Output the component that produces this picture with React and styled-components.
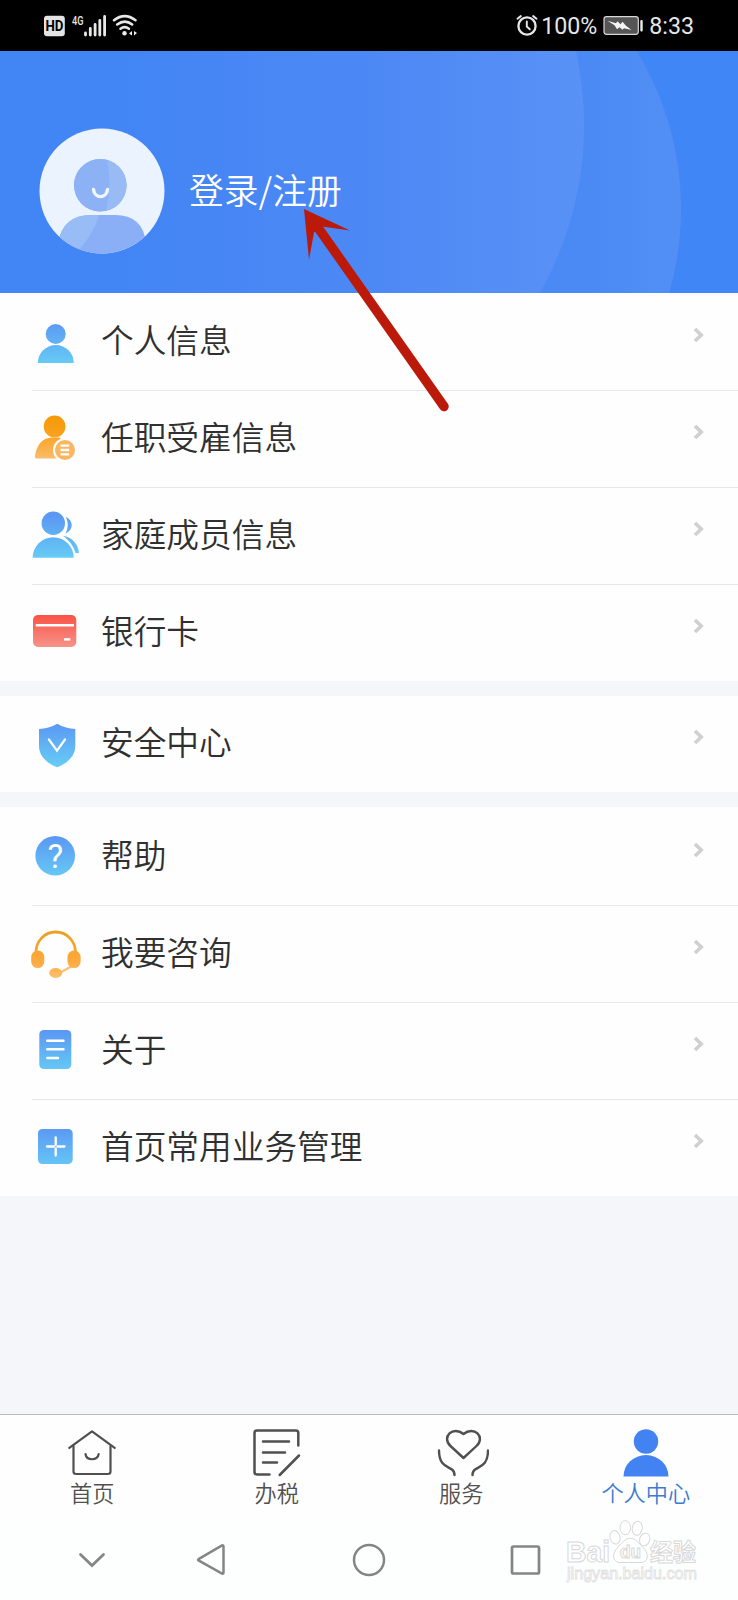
import React from 'react';
import styled, { createGlobalStyle } from 'styled-components';

const GlobalStyle = createGlobalStyle`
    * {
        box-sizing: border-box;
    }

    body {
        margin: 0;
        background: #f5f6fa;
        font-family: Roboto, "Noto Sans CJK SC", sans-serif;
    }
`

const Page = styled.div`
    position: relative;
    display: flex;
    flex-direction: column;
    width: 738px;
    height: 1600px;
    overflow: hidden;
    background: #f5f6fa;
`

const StatusBar = styled.div`
    display: flex;
    flex: 0 0 51px;
    align-items: center;
    justify-content: space-between;
    padding: 0 44px 0 44px;
    background: #000;
    color: #e6e6e6;
`

const StatusGroup = styled.div`
    display: flex;
    align-items: center;
    height: 51px;
`

const StatusText = styled.span`
    font-size: 23.2px;
    line-height: 51px;
    padding-top: 1px;
    margin-left: ${props => props.$gap || 0}px;
`

const BatteryIcon = styled.svg`
    margin-left: 6px;
`

const Header = styled.header`
    position: relative;
    display: flex;
    flex: 0 0 242px;
    align-items: center;
    padding: 38px 0 0 39px;
    background: #4285f4;
`

const HeaderBackdrop = styled.svg`
    position: absolute;
    left: 0;
    top: 0;
`

const Avatar = styled.svg`
    position: relative;
`

const LoginText = styled.div`
    position: relative;
    margin: -5px 0 0 23px;
    color: #fff;
    font-family: "Noto Sans CJK SC", sans-serif;
    font-size: 34.8px;
    font-weight: 350;
    line-height: 50px;
`

const MenuGroup = styled.section`
    flex: 0 0 auto;
    padding-top: ${props => props.$top || 0}px;
    margin-bottom: 15px;
    background: #fefefe;
`

const MenuRow = styled.div`
    display: flex;
    align-items: center;
    height: 97px;
    margin-left: 32px;
    padding-right: 33px;
    border-bottom: 1px solid #e6e8e9;

    &:last-child {
        height: 96px;
        border-bottom: none;
    }
`

const MenuIcon = styled.svg`
    flex: 0 0 56px;
    margin-left: -4px;
`

const MenuLabel = styled.div`
    flex: 1;
    margin: -6px 0 0 17px;
    color: #303030;
    font-family: "Noto Sans CJK SC", sans-serif;
    font-size: 32.7px;
    font-weight: 350;
    line-height: 46px;
`

const Arrow = styled.svg`
    margin-top: -14px;
`

const Spacer = styled.div`
    flex: 1;
`

const TabBar = styled.nav`
    display: flex;
    flex: 0 0 108px;
    border-top: 1px solid #b9bbc0;
    background: #fefefe;
`

const Tab = styled.div`
    display: flex;
    flex: 1;
    flex-direction: column;
    align-items: center;
    padding-top: 9px;
    color: ${props => props.$active ? '#3b7bd0' : '#505050'};
`

const TabLabel = styled.div`
    margin-top: -2px;
    font-family: "Noto Sans CJK SC", sans-serif;
    font-size: 22.2px;
    font-weight: 350;
    line-height: 32px;
`

const SystemNav = styled.div`
    display: flex;
    flex: 0 0 78px;
    align-items: center;
    padding: 0 0 3px 74px;
    background: #fdfefe;
`

const NavIcon = styled.svg`
    flex: 0 0 36px;
    margin-right: ${props => props.$gap || 0}px;
`

const Pointer = styled.svg`
    position: absolute;
    left: 296px;
    top: 200px;
`

const Watermark = styled.svg`
    position: absolute;
    left: 563px;
    top: 1518px;
`

const Gradients = () => (
    <svg width="0" height="0" style={{ display: 'block' }}>
        <defs>
            <linearGradient id="blue" gradientUnits="userSpaceOnUse" x1="0" y1="7" x2="0" y2="50">
                <stop offset="0" stopColor="#5b97f3" />
                <stop offset="1" stopColor="#66ccf5" />
            </linearGradient>
            <linearGradient id="orange" gradientUnits="userSpaceOnUse" x1="0" y1="5" x2="0" y2="52">
                <stop offset="0" stopColor="#f59a07" />
                <stop offset="0.35" stopColor="#faa01a" />
                <stop offset="1" stopColor="#fbc078" />
            </linearGradient>
            <linearGradient id="band" gradientUnits="userSpaceOnUse" x1="0" y1="5" x2="0" y2="52">
                <stop offset="0" stopColor="#e9a01d" />
                <stop offset="0.6" stopColor="#fda83a" />
                <stop offset="1" stopColor="#fbbf6c" />
            </linearGradient>
            <linearGradient id="red" x1="0" y1="0" x2="0" y2="1">
                <stop offset="0" stopColor="#fb5246" />
                <stop offset="1" stopColor="#f59389" />
            </linearGradient>
        </defs>
    </svg>
)

const icons = {
    person: (
        <g fill="url(#blue)">
            <circle cx="27.7" cy="20" r="10" />
            <path d="M9.8 49a18 18 0 0 1 36 0z" />
        </g>
    ),
    job: (
        <>
            <g fill="url(#orange)">
                <circle cx="26.6" cy="15.5" r="10.9" />
                <path d="M8.5 47.6q-1.700 0-1.500-2C8 35 14 26.500 24 26.500h7.500L38 34v13.600z" />
            </g>
            <circle cx="37" cy="39" r="12" fill="#fefefe" />
            <circle cx="37" cy="39" r="10" fill="#fbb65f" />
            <path d="M32.5 34.700h8.700M32.5 39h8.700M32.5 43.300h8.700" stroke="#fff" strokeWidth="2.300" />
        </>
    ),
    family: (
        <g fill="url(#blue)">
            <circle cx="25.3" cy="15.3" r="11.7" />
            <path d="M4.7 49.700a20.5 20.5 0 0 1 41 0z" />
            <path d="M37.8 8.800c8 4 8 13.500-.3 16.800 2.800-5.500 3-11 .3-16.800z" />
            <path d="M34.8 27.800C44 29 50 36 51 44.900h-3.500C45.5 38 41.5 32.500 34.8 27.800z" />
        </g>
    ),
    card: (
        <>
            <rect x="5" y="10" width="43.3" height="32" rx="5" fill="url(#red)" />
            <path d="M7.7 20.300H46" stroke="#fff" strokeWidth="2.600" />
            <path d="M36 34.400h6.300" stroke="#fff" strokeWidth="2.400" />
        </>
    ),
    shield: (
        <>
            <path d="M29.2 7.700C35 11 41 12.700 47.300 12.900V30c0 10.500-8.500 17.500-18.100 21.300C19.5 47.500 11 40.500 11 30V12.900C17.500 12.700 23.500 11 29.200 7.700z" fill="url(#blue)" />
            <path d="M20.9 23.500l8.100 11.200 8-11.200" fill="none" stroke="#fff" strokeWidth="2.200" strokeLinecap="round" />
        </>
    ),
    help: (
        <>
            <circle cx="27.2" cy="26.7" r="19.8" fill="url(#blue)" />
            <text x="27.2" y="38.500" textAnchor="middle" fontFamily="Roboto, sans-serif" fontWeight="400" fontSize="33" fill="#fff">?</text>
        </>
    ),
    headset: (
        <>
            <path d="M8 28v-2a19.7 20 0 0 1 39.4 0v2" fill="none" stroke="url(#band)" strokeWidth="2.800" />
            <path d="M33 46.200l11-6.200" stroke="#fbc078" strokeWidth="2.200" />
            <g fill="url(#band)">
                <rect x="3.2" y="24.600" width="13.1" height="17.5" rx="6.5" />
                <rect x="39.5" y="24.600" width="13.1" height="17.5" rx="6.5" />
                <ellipse cx="27.7" cy="47" rx="6.5" ry="5" />
            </g>
        </>
    ),
    doc: (
        <>
            <rect x="11.3" y="7" width="32" height="39" rx="4.5" fill="url(#blue)" />
            <path d="M19.2 17.700h16.300M19.2 26.300h16.300M19.2 35h10.800" stroke="#fff" strokeWidth="2.400" strokeLinecap="round" />
        </>
    ),
    plus: (
        <>
            <rect x="10" y="9" width="34.7" height="35" rx="4.5" fill="url(#blue)" />
            <path d="M19 26.500h7M29.500 26.500h7M27.700 17.500v7.300M27.700 28.300v7.300" stroke="#fff" strokeWidth="2.300" strokeLinecap="round" />
        </>
    ),
}

const groups = [
    {
        top: 1,
        rows: [
            { icon: 'person', label: '个人信息' },
            { icon: 'job', label: '任职受雇信息' },
            { icon: 'family', label: '家庭成员信息' },
            { icon: 'card', label: '银行卡' },
        ],
    },
    {
        top: 0,
        rows: [{ icon: 'shield', label: '安全中心' }],
    },
    {
        top: 2,
        rows: [
            { icon: 'help', label: '帮助' },
            { icon: 'headset', label: '我要咨询' },
            { icon: 'doc', label: '关于' },
            { icon: 'plus', label: '首页常用业务管理' },
        ],
    },
]

// every tab drawing sits in a 56x54 box
const tabs = [
    {
        label: '首页',
        icon: (
            <g fill="none" stroke="#505050" strokeWidth="2.2" strokeLinecap="round" strokeLinejoin="round">
                <path d="M5.300 23.800L28 7.300l22.700 16.500" />
                <path d="M9.500 22v25.500q0 2.500 2.500 2.500h32q2.500 0 2.500-2.500V22" />
                <path d="M21.500 30c1 7 12 7 13.200 0" />
            </g>
        ),
    },
    {
        label: '办税',
        icon: (
            <g fill="none" stroke="#505050" strokeWidth="2.5" strokeLinecap="round" strokeLinejoin="round">
                <path d="M49.300 21.500V9q0-2.500-2.500-2.500H8q-2.500 0-2.500 2.500v39q0 2.500 2.500 2.500h12.500" />
                <path d="M14 17.500h26M14 28.500h22M14 38.500h14M30.700 51l19.300-19.500" />
            </g>
        ),
    },
    {
        label: '服务',
        icon: (
            <g fill="none" stroke="#505050" strokeWidth="2.4" strokeLinecap="round" strokeLinejoin="round">
                <path d="M30.500 34L17.500 22C8 13 20 1.500 30.500 10 41 1.500 53 13 43.500 22z" />
                <path d="M6 26.500c0 14.500 7.500 15.500 13 19q2.500 2 2.500 5.500" />
                <path d="M55 26.500c0 14.500-7.500 15.500-13 19Q39.500 47.500 39.500 51" />
            </g>
        ),
    },
    {
        label: '个人中心',
        active: true,
        icon: (
            <g fill="#4282f2">
                <circle cx="28" cy="17.500" r="12.200" />
                <path d="M5.500 52.500a22.500 21.500 0 0 1 45 0z" />
            </g>
        ),
    },
]

function Status() {
    return (
        <StatusBar>
            <StatusGroup>
                <svg width="96" height="51" viewBox="44 0 96 51">
                    <rect x="44" y="15.700" width="20.800" height="20.500" rx="3" fill="#e4e4e4" />
                    <text x="45.500" y="31.300" fontSize="15" fontWeight="700" fill="#000" textLength="18" lengthAdjust="spacingAndGlyphs">HD</text>
                    <text x="72" y="24.500" fontSize="13" fontWeight="500" fill="#e4e4e4" textLength="11.500" lengthAdjust="spacingAndGlyphs">4G</text>
                    <path d="M85.500 35v-2M90.300 35v-6.500M95.100 35V24.500M99.800 35V20.500M104.600 35V16.500" stroke="#e8e8e8" strokeWidth="2.800" strokeLinecap="round" />
                    <g fill="none" stroke="#e8e8e8" strokeWidth="2.600" strokeLinecap="round">
                        <path d="M114 20.200q10.700-8.200 21.500 0" />
                        <path d="M117.200 24.500q7.600-5.600 15 0" />
                        <path d="M120.500 28.700q4.200-3 8.400 0" />
                    </g>
                    <circle cx="124.500" cy="33.300" r="2.200" fill="#ededed" />
                    <path d="M129 33.500l3-2.500v4.500zM134 31v4.500l3-2.500z" fill="#ededed" />
                </svg>
            </StatusGroup>
            <StatusGroup>
                <svg width="22" height="51" viewBox="516 0 22 51">
                    <g fill="none" stroke="#e6e6e6" strokeLinecap="round">
                        <circle cx="527" cy="26" r="8.600" strokeWidth="2.300" />
                        <path d="M526.800 21.500v5l3 2.800" strokeWidth="1.900" />
                        <path d="M517.500 18.700l3.300-2.600M536.500 18.700l-3.300-2.600" strokeWidth="2" />
                    </g>
                </svg>
                <StatusText $gap={3}>100%</StatusText>
                <BatteryIcon width="40" height="51" viewBox="603 0 40 51">
                    <rect x="604" y="16.700" width="34.300" height="17.600" rx="2.500" fill="#555" stroke="#d8d8d8" strokeWidth="1.200" />
                    <rect x="640.300" y="20" width="2.400" height="11.500" rx="1" fill="#ececec" />
                    <path d="M607.500 20.800l8.500 2.400 1.500-2 3 3 2-2.500 3.500 4 5.500 4.300-7.500-1.800-1.500 1.500-3-2.500-2.500 2-2.500-4z" fill="#f4f4f4" />
                </BatteryIcon>
                <StatusText $gap={6}>8:33</StatusText>
            </StatusGroup>
        </StatusBar>
    )
}

function Profile() {
    return (
        <Header>
            <HeaderBackdrop width="738" height="242" viewBox="0 51 738 242">
                <defs>
                    <linearGradient id="outer" gradientUnits="userSpaceOnUse" x1="180" y1="0" x2="682" y2="0">
                        <stop offset="0" stopColor="#4285f4" />
                        <stop offset="0.600" stopColor="#4b88f5" />
                        <stop offset="0.830" stopColor="#4b8af5" />
                        <stop offset="1" stopColor="#538ff4" />
                    </linearGradient>
                    <linearGradient id="inner" gradientUnits="userSpaceOnUse" x1="120" y1="0" x2="585" y2="0">
                        <stop offset="0" stopColor="#4285f4" />
                        <stop offset="0.600" stopColor="#4e89f5" />
                        <stop offset="1" stopColor="#5992f6" />
                    </linearGradient>
                </defs>
                <rect x="600" y="51" width="138" height="242" fill="#4086f6" />
                <circle cx="378" cy="209" r="303" fill="url(#outer)" />
                <circle cx="243" cy="125" r="341" fill="url(#inner)" />
            </HeaderBackdrop>
            <Avatar width="127" height="127" viewBox="39 128 127 127">
                <defs>
                    <clipPath id="face">
                        <circle cx="102" cy="191" r="62.500" />
                    </clipPath>
                    <clipPath id="figure">
                        <circle cx="100.300" cy="185.300" r="26.300" />
                        <path d="M58 260V243q5-28 33-28h24q28 0 31 28v17z" />
                    </clipPath>
                </defs>
                <g clipPath="url(#face)">
                    <rect x="39" y="128" width="127" height="127" fill="#eaf3fe" />
                    <g clipPath="url(#figure)">
                        <rect x="39" y="128" width="127" height="127" fill="#8baff6" />
                        <path d="M39 128h68q7 50-11 96-8 17-22 31H39z" fill="#98bcf6" />
                        <circle cx="100.300" cy="185.300" r="26.300" fill="#8cb1f5" />
                        <path d="M107 159q5 25-1 53 20-4 21-27-2-21-20-26z" fill="#9dbff6" opacity="0.700" />
                        <path d="M93.500 189.500c1 9.500 13 9.500 14 0" fill="none" stroke="#eff6ff" strokeWidth="3.400" strokeLinecap="round" />
                    </g>
                </g>
            </Avatar>
            <LoginText>登录/注册</LoginText>
        </Header>
    )
}

export default function App() {
    return (
        <Page>
            <GlobalStyle />
            <Gradients />
            <Status />
            <Profile />
            {
                groups.map((group, i) => (
                    <MenuGroup key={i} $top={group.top}>
                        {
                            group.rows.map((row) => (
                                <MenuRow key={row.label}>
                                    <MenuIcon width="56" height="56" viewBox="0 0 56 56">
                                        {icons[row.icon]}
                                    </MenuIcon>
                                    <MenuLabel>{row.label}</MenuLabel>
                                    <Arrow width="12" height="16" viewBox="0 0 12 16">
                                        <path d="M2 2l6.200 6L2 14" fill="none" stroke="#d0d0d0" strokeWidth="3.600" />
                                    </Arrow>
                                </MenuRow>
                            ))
                        }
                    </MenuGroup>
                ))
            }
            <Spacer />
            <TabBar>
                {
                    tabs.map((tab) => (
                        <Tab key={tab.label} $active={tab.active}>
                            <svg width="56" height="54" viewBox="0 0 56 54">{tab.icon}</svg>
                            <TabLabel>{tab.label}</TabLabel>
                        </Tab>
                    ))
                }
            </TabBar>
            <SystemNav>
                <NavIcon $gap={83} width="36" height="36" viewBox="0 0 36 36">
                    <path d="M6.500 12.500L18 23.500l11.500-11" fill="none" stroke="#858585" strokeWidth="2.800" strokeLinecap="round" />
                </NavIcon>
                <NavIcon $gap={122} width="36" height="36" viewBox="0 0 36 36">
                    <path d="M5.500 17.200L29 3.500q1.500-.5 1.500 1v26q0 1.500-1.500 1L5.500 18.400q-1-.6 0-1.200z" fill="none" stroke="#858585" strokeWidth="2.500" />
                </NavIcon>
                <NavIcon $gap={120} width="36" height="36" viewBox="0 0 36 36">
                    <circle cx="18" cy="18" r="15" fill="none" stroke="#858585" strokeWidth="2.500" />
                </NavIcon>
                <NavIcon width="36" height="36" viewBox="0 0 36 36">
                    <rect x="5" y="4.500" width="27" height="27" rx="1.500" fill="none" stroke="#858585" strokeWidth="2.700" />
                </NavIcon>
            </SystemNav>
            <Pointer width="160" height="216" viewBox="296 200 160 216">
                <path d="M319 229L444 406.500" stroke="#bb1a0b" strokeWidth="9.500" strokeLinecap="round" />
                <path d="M304 209l46 21.500-28-4-8 6-5 27z" fill="#bb1a0b" />
            </Pointer>
            <Watermark width="140" height="66" viewBox="0 0 140 66">
                <g fill="#fff" stroke="#d8d8d8" strokeWidth="1">
                    <ellipse cx="52" cy="19.300" rx="5" ry="6.800" transform="rotate(-15 52 19.300)" />
                    <ellipse cx="62.300" cy="9.700" rx="5.300" ry="7" />
                    <ellipse cx="74.300" cy="10.300" rx="5" ry="7" transform="rotate(10 74.300 10.300)" />
                    <ellipse cx="81.700" cy="21.500" rx="5" ry="6.500" transform="rotate(20 81.700 21.500)" />
                    <path d="M67.500 20.300c5.500 0 8 4.700 12 8.700 7 6 6 15-1 15.500H56.500c-7-.5-8-9-1.500-15.500 4-4 7-8.700 12.500-8.700z" />
                    <text x="3" y="43.500" fontFamily="Liberation Sans, sans-serif" fontWeight="700" fontSize="29" textLength="44" lengthAdjust="spacingAndGlyphs">Bai</text>
                    <text x="57" y="40" fontFamily="Liberation Sans, sans-serif" fontWeight="700" fontSize="18" textLength="21" lengthAdjust="spacingAndGlyphs">du</text>
                    <text x="87" y="42.500" fontFamily="Noto Sans CJK SC, sans-serif" fontWeight="700" fontSize="24" textLength="46" lengthAdjust="spacingAndGlyphs">经验</text>
                    <text x="4" y="60.500" fontFamily="Liberation Sans, sans-serif" fontSize="16" textLength="130" lengthAdjust="spacingAndGlyphs" strokeWidth="0.800" stroke="#e0e0e0">jingyan.baidu.com</text>
                </g>
            </Watermark>
        </Page>
    )
}
